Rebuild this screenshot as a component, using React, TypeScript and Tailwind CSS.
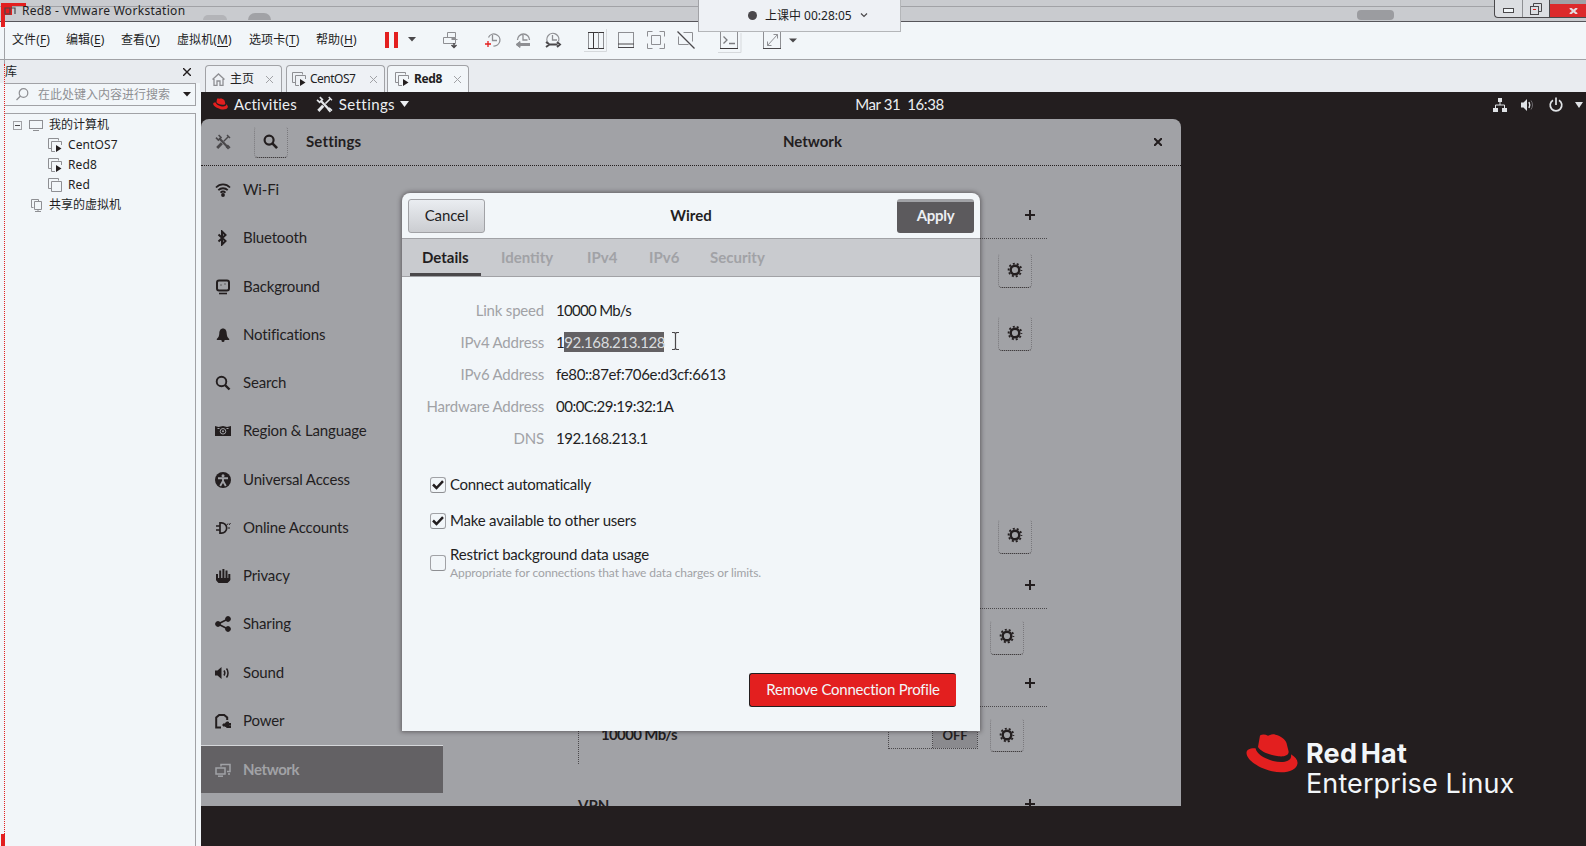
import type { ReactNode } from "react";

const CJK = "font-['Noto_Sans','Noto_Sans_CJK_SC',sans-serif]";

/* ---------- icons ---------- */

function Gear() {
  return (
    <svg width="16" height="16" viewBox="0 0 16 16" fill="none" stroke="#231e1f">
      <circle cx="8" cy="8" r="4.3" strokeWidth="2.4" />
      <circle cx="8" cy="8" r="6.4" strokeWidth="1.8" strokeDasharray="2 2.02" strokeDashoffset="1" />
    </svg>
  );
}

function Plus() {
  return (
    <svg width="10" height="10" viewBox="0 0 10 10" stroke="#231e1f" strokeWidth="2">
      <path d="M5 0v10M0 5h10" />
    </svg>
  );
}

function Tools({ size, color }: { size: number; color: string }) {
  return (
    <svg width={size} height={size} viewBox="0 0 16 16" fill="none" stroke={color}>
      <path d="M4.5 4.5l8 8.5" strokeWidth="2.2" />
      <path d="M1 3.6L3.4 6 6 3.4 3.6 1" strokeWidth="1.6" />
      <path d="M12.3 11.2l2.7 2.6M11.2 12.4l2.4 2.6" strokeWidth="1.6" />
      <path d="M13.5 2.5L8.8 7.2" strokeWidth="1.4" />
      <path d="M6.8 9.2L2.2 14" strokeWidth="2.8" />
      <path d="M12 1l3 3" strokeWidth="1.4" />
    </svg>
  );
}

function Hat({ w, h }: { w: number; h: number }) {
  return (
    <svg width={w} height={h} viewBox="0 0 52 39">
      <path
        fill="#e31f1f"
        d="M14 1.5c2-1.500 5.500-1.300 8 .2 2.500-1.300 5-1.700 7.500-1 5.500 1.500 9.500 4.300 11 8.300l2 8c1 4.500-4.500 6-10 5.300C24 21.300 14.500 17.500 12 13zM9.500 14.300c1.200 5.500 8 10 17.500 12.700 9 2.200 17 1 18-4 .3-1.300.1-2-.1-2.800 4.500 2.500 7 6 6.600 9.300-1 7.500-12.500 10.500-25.500 7.800C12 34 .5 25.500.5 19c0-3.500 3.500-5 9-4.700z"
      />
    </svg>
  );
}

function VmIcon({ running = true }: { running?: boolean }) {
  return (
    <svg className="shrink-0" width="14" height="14" viewBox="0 0 14 14" fill="none" stroke="#8e8f93">
      <path d="M3.500 10.500h-3v-10h10v2" />
      <path d={running ? "M7 13.500H3.500v-10h10V7" : "M3.500 3.500h10v10h-10z"} />
      {running && <path d="M8 7l5.500 3.500L8 14z" fill="#231e1f" stroke="none" />}
    </svg>
  );
}

const S = "#231e1f";
const sideIcons: Record<string, ReactNode> = {
  "Wi-Fi": (
    <g fill="none" stroke={S} strokeWidth="1.800">
      <path d="M1 5.500C5 1.300 11 1.300 15 5.500M3.300 8.200c2.700-2.600 6.700-2.600 9.400 0M5.500 10.600c1.500-1.300 3.500-1.300 5 0" />
      <circle cx="8" cy="13" r="1" fill={S} />
    </g>
  ),
  Bluetooth: <path d="M3.500 4.500l7 6.500L7 14.500v-13L10.500 5l-7 6.500" fill="none" stroke={S} strokeWidth="2" />,
  Background: (
    <g fill="none" stroke={S}>
      <rect x="2" y="1.500" width="12" height="10" rx="2" strokeWidth="2" />
      <path d="M4 14.500h8" strokeWidth="1.600" />
      <path d="M5.500 6h1M9.500 5h1" />
    </g>
  ),
  Notifications: (
    <g fill={S}>
      <path d="M8 1.500c2.600 0 3.600 2.300 3.700 5 .2 2.500.8 4 2.500 5.500v1H1.800v-1c1.700-1.500 2.300-3 2.500-5.500.1-2.700 1.100-5 3.700-5z" />
      <circle cx="8" cy="13.500" r="1.500" />
    </g>
  ),
  Search: (
    <g fill="none" stroke={S}>
      <circle cx="6.500" cy="6.500" r="4.800" strokeWidth="1.900" />
      <path d="M10 10l4.500 4.500" strokeWidth="2.400" />
    </g>
  ),
  "Region & Language": (
    <g>
      <path d="M0 3l3.500 1L8 3l4 1 4-1v10H0z" fill={S} />
      <circle cx="8" cy="8.300" r="2.800" fill="none" stroke="#a1a2a6" />
      <circle cx="8" cy="8.300" r="1" fill="#a1a2a6" />
      <path d="M2.500 5.500h2M11.500 5.500h2" stroke="#a1a2a6" />
    </g>
  ),
  "Universal Access": (
    <g>
      <circle cx="8" cy="8" r="8" fill={S} />
      <circle cx="8" cy="3.700" r="1.500" fill="#a1a2a6" />
      <path d="M3 6.200h10M8 6v4M8 9l-2.800 5M8 9l2.800 5" stroke="#a1a2a6" strokeWidth="1.900" />
    </g>
  ),
  "Online Accounts": (
    <g fill="none" stroke={S} strokeWidth="1.700">
      <path d="M5 2v12M5 2.800h1.500a5 5 0 010 10.400H5M1 6h4M1 10h4" />
      <path d="M11.500 5.500l1.500-2M13 8h2M14 5l1.500-2" strokeWidth="1" />
    </g>
  ),
  Privacy: (
    <g fill="none" stroke={S} strokeWidth="2">
      <path d="M2 6v6M5.200 2.500V12M8.400 1v11M11.500 2.500V12M14.300 6v6" />
      <path d="M1.200 10h13.900v2.500L12.500 15h-9l-2.300-2.500z" fill={S} stroke="none" />
    </g>
  ),
  Sharing: (
    <g fill={S} stroke={S}>
      <path d="M13 3L3 8l10 5" fill="none" strokeWidth="1.700" />
      <circle cx="13" cy="3" r="2.400" />
      <circle cx="3" cy="8" r="2.400" />
      <circle cx="13" cy="13" r="2.400" />
    </g>
  ),
  Sound: (
    <g>
      <path d="M0 5.500h2.500L6.500 2v12L2.500 10.500H0z" fill={S} />
      <path d="M9 5.500c1 1.500 1 3.500 0 5M11.500 3.500c2 2.500 2 6.500 0 9" fill="none" stroke={S} strokeWidth="1.500" />
    </g>
  ),
  Power: (
    <g>
      <path d="M6 14.500H1.200v-10l3-2.500h5l3 2.500V7" fill="none" stroke={S} strokeWidth="2" />
      <path d="M8 11h2l1.500-2h2v1.500H16V12h-2.500v1H16v1.500h-4L10 13H8z" fill={S} stroke={S} />
    </g>
  ),
  Network: (
    <g fill="none" stroke="#a1a2a6" strokeWidth="1.500">
      <path d="M6 4.500v-2h9v7h-3M13 12h2" />
      <rect x="1" y="6" width="9" height="6" />
      <path d="M3 14.200h5" />
    </g>
  ),
};

/* ---------- VMware chrome ---------- */

function TitleBar() {
  return (
    <div className="relative h-[22px] shrink-0 border-b border-[#56555a] bg-[#c9cbcf]">
      <div className="h-[7px] border-b border-[#a1a2a6]" />
      <div className="absolute left-[22px] top-0 whitespace-nowrap font-['Noto_Sans',sans-serif] text-[12px] leading-[21px] tracking-[0.3px] text-[#231e1f]">
        Red8 - VMware Workstation
      </div>
      <svg className="absolute left-0 top-0" width="30" height="28" viewBox="0 0 30 28">
        <path d="M1 3h25v3H12v9H5v12H1z" fill="#e31f1f" />
        <path d="M5 8h5v6H5zM11 8h4v6" fill="none" stroke="#4a484b" strokeWidth="1.200" />
      </svg>
      <div className="absolute left-[203px] top-[15px] h-[5px] w-[24px] rounded-t-full bg-[#b3b4b8]" />
      <div className="absolute left-[248px] top-[13px] h-[7px] w-[23px] rounded-t-full bg-[#a1a2a6]" />
      <div className="absolute left-[1357px] top-[10px] h-[10px] w-[37px] rounded-[4px] bg-[#9b9ca0]" />
      <div className="absolute right-0 top-0 flex h-[18px] w-[92px] rounded-bl border-b border-l border-[#4a484b] bg-[#dcdee2]">
        <div className="flex w-[28px] items-center justify-center border-r border-[#8e8f93]">
          <div className="mt-1 h-[5px] w-[11px] border border-[#4a484b] bg-[#f2f6f9]" />
        </div>
        <div className="flex w-[27px] items-center justify-center border-r border-[#4a484b]">
          <svg width="12" height="12" viewBox="0 0 12 12" fill="none" stroke="#4a484b">
            <path d="M3.500 3V.5h8v8H9" />
            <rect x=".5" y="3.500" width="8" height="8" />
            <path d="M3 6.500h3" stroke="#e31f1f" />
          </svg>
        </div>
        <div className="flex flex-1 flex-col bg-[#a1a2a6]">
          <div className="mt-[4px] flex flex-1 items-center justify-center bg-[#dc2a2b]">
            <svg className="ml-[11px]" width="9" height="6" viewBox="0 0 9 6" stroke="#e4dcdf" strokeWidth="2.200">
              <path d="M1 0l7 6M8 0L1 6" />
            </svg>
          </div>
        </div>
      </div>
    </div>
  );
}

const menus: [string, string, string][] = [
  ["文件", "F", "w-[54px]"],
  ["编辑", "E", "w-[55px]"],
  ["查看", "V", "w-[56px]"],
  ["虚拟机", "M", "w-[72px]"],
  ["选项卡", "T", "w-[67px]"],
  ["帮助", "H", "w-[68px]"],
];

function Caret({ className = "" }: { className?: string }) {
  return (
    <svg className={className} width="8" height="5" viewBox="0 0 8 5">
      <path d="M0 0h8L4 4.500z" fill="#4a484b" />
    </svg>
  );
}

function MenuBar() {
  return (
    <div className="flex h-[38px] shrink-0 items-center border-b border-[#a1a2a6] bg-[#f2f6f9] pl-[12px]">
      {menus.map(([t, k, w]) => (
        <div key={t} className={`${w} ${CJK} mb-[2px] shrink-0 whitespace-nowrap text-[12px] leading-[20px] tracking-[0.1px] text-[#231e1f]`}>
          {t}(<span className="underline underline-offset-2">{k}</span>)
        </div>
      ))}
      <div className="mb-[2px] flex gap-[5px] pl-px">
        <div className="h-4 w-1 bg-[#e31f1f]" />
        <div className="h-4 w-1 bg-[#e31f1f]" />
      </div>
      <Caret className="mb-[2px] ml-[10px] shrink-0" />
      <svg className="shrink-0" width="392" height="36" viewBox="416 23 392 36" fill="none" stroke="#8e8f93">
        <g transform="translate(6 0)">
          <path d="M441.500 37.500v-5h8v5M437.500 37.500h12v6h-12zM445.500 39.500h6M449.500 40.500v-2h-4" />
          <path d="M448 43v4M445.500 45l2.500 2.500 2.500-2.500" stroke="#4a484b" strokeWidth="1.500" />
        </g>
        <g transform="translate(8 0)">
          <path d="M480.500 37.500a6 6 0 115 8.500M484.500 35v5.500h4.500" strokeWidth="1.300" />
          <path d="M477 44h6M480 41v6" stroke="#e31f1f" strokeWidth="1.300" />
        </g>
        <g transform="translate(10 0)">
          <path d="M507.500 40a6 6 0 0112 0M513 35v5h4.500" strokeWidth="1.300" />
          <path d="M507 44.500h13" strokeWidth="3" />
          <path d="M506 44.500l4-3v6z" fill="#8e8f93" />
        </g>
        <g transform="translate(12 0)">
          <path d="M536.500 43.500a6 6 0 1110-2M540.500 35v5h4.500" strokeWidth="1.300" />
          <path d="M534 42l3.500 2.500h8M534 47l3.500-2.500M545 42l3 2.500-3 2.500" stroke="#4a484b" strokeWidth="1.900" />
        </g>
        <path d="M584 51.500h22.500V29" stroke="#d6d9dc" />
        <rect x="588.500" y="32.500" width="15" height="16" />
        <path d="M588 32.500h16M588 48.500h16M593.500 32.500v16" stroke="#3c393b" />
        <path d="M598.500 32.500v16" />
        <rect x="618.500" y="32.500" width="15" height="15" />
        <path d="M618 44h16M618 47.500h16" stroke="#4a484b" />
        <path d="M647.500 36.500v-5h5M659.500 31.500h5v5M664.500 43.500v5h-5M652.500 48.500h-5v-5M651.500 35.500h9v9h-9z" />
        <path d="M683.500 32.500h9v9M678.500 36.500v8h10" />
        <path d="M677.500 31.500l17 17" stroke="#4a484b" strokeWidth="1.300" />
        <path d="M718 52.500h23V33" stroke="#d6d9dc" />
        <rect x="720.500" y="31.500" width="17" height="17" />
        <path d="M720 31.500h18M720 48.500h18" stroke="#3c393b" />
        <path d="M723.500 36.500l3.500 3.500-3.500 3.500M729 43.500h6" stroke="#7b7b7f" strokeWidth="1.300" />
        <rect x="763.500" y="31.500" width="17" height="17" />
        <path d="M763 31.500h18M763 48.500h18" stroke="#4a484b" />
        <path d="M767.500 45.500l10-11M773.500 34.500h4v4M767.500 41.500v4h4" />
        <path d="M789 38.500h8l-4 4z" fill="#4a484b" stroke="none" />
      </svg>
    </div>
  );
}

function SessionTimer() {
  return (
    <div className={`absolute left-[698px] top-0 flex h-[32px] w-[203px] items-center border-x border-b border-[#b4b6b9] border-l-[#a1a2a6] bg-[#eef1f5] ${CJK}`}>
      <div className="ml-[49px] size-[9px] rounded-full bg-[#4a484b]" />
      <div className="ml-[8px] whitespace-nowrap text-[12px] leading-[30px] text-[#231e1f]">上课中 00:28:05</div>
      <svg className="ml-[8px]" width="8" height="5" viewBox="0 0 8 5" fill="none" stroke="#4a484b" strokeWidth="1.200">
        <path d="M1 .5l3 3 3-3" />
      </svg>
    </div>
  );
}

function Library() {
  const row = "flex h-5 items-center text-[12px] leading-5 text-[#231e1f]";
  return (
    <div className={`flex w-[200px] shrink-0 flex-col bg-[#f2f6f9] pl-[5px] pr-1 ${CJK}`}>
      <div className="-ml-[5px] -mr-1 flex h-[23px] items-center justify-between bg-[#e8ebef] pl-[5px] pr-[9px] text-[12px] text-[#231e1f]">
        <span>库</span>
        <svg width="8" height="8" viewBox="0 0 8 8" stroke="#231e1f" strokeWidth="1.400">
          <path d="M0 0l8 8M8 0L0 8" />
        </svg>
      </div>
      <div className="flex h-[23px] shrink-0 items-center border-y border-r border-[#a1a2a6]">
        <svg className="ml-[11px]" width="13" height="13" viewBox="0 0 13 13" fill="none" stroke="#8e8f93" strokeWidth="1.200">
          <circle cx="7.500" cy="5" r="4.300" />
          <path d="M4.500 8L.5 12" />
        </svg>
        <span className="ml-[9px] whitespace-nowrap text-[12px] leading-5 text-[#8e8f93]">在此处键入内容进行搜索</span>
        <svg className="ml-[13px] shrink-0" width="8" height="5" viewBox="0 0 8 5">
          <path d="M0 0h8L4 4.500z" fill="#231e1f" />
        </svg>
      </div>
      <div className="mt-[7px] flex-1 border-r border-t border-[#a1a2a6] pt-px">
        <div className={row}>
          <svg className="ml-2" width="9" height="9" viewBox="0 0 9 9" fill="none" stroke="#a1a2a6">
            <rect x=".5" y=".5" width="8" height="8" />
            <path d="M2 4.500h5" stroke="#4a484b" />
          </svg>
          <svg className="ml-[7px] mr-[6px]" width="14" height="11" viewBox="0 0 14 11" fill="none" stroke="#8e8f93">
            <rect x=".5" y=".5" width="13" height="8" />
            <path d="M4 10.500h6" />
          </svg>
          我的计算机
        </div>
        {["CentOS7", "Red8", "Red"].map((n) => (
          <div key={n} className={`${row} gap-[6px] pl-[43px] text-[12.5px] tracking-[0.1px]`}>
            <VmIcon running={n !== "Red"} />
            {n}
          </div>
        ))}
        <div className={row}>
          <svg className="ml-[26px] mr-[7px]" width="11" height="13" viewBox="0 0 11 13" fill="none" stroke="#8e8f93">
            <path d="M2.500 8.500h-2v-8h7v2M3.500 2.500h7v8h-7zM7 10.500v2M4 12.500h6" />
          </svg>
          共享的虚拟机
        </div>
      </div>
    </div>
  );
}

function TabX({ className }: { className: string }) {
  return (
    <svg className={className} width="7" height="7" viewBox="0 0 7 7" stroke="#a1a2a6">
      <path d="M0 0l7 7M7 0L0 7" />
    </svg>
  );
}

function TabStrip() {
  const tab = "flex h-[27px] items-center rounded-t border-x border-t border-[#a1a2a6] text-[12px] text-[#231e1f]";
  return (
    <div className={`flex h-[32px] shrink-0 items-end bg-[#e9ecf0] pl-[5px] ${CJK}`}>
      <div className={`${tab} w-[77px] bg-[#eef1f5] pl-[6px]`}>
        <svg width="13" height="13" viewBox="0 0 13 13" fill="none" stroke="#8e8f93" strokeWidth="1.300">
          <path d="M.5 6.500l6-5.500 6 5.500M2 6v6.300h3V8h3v4.300h3V6" />
        </svg>
        <span className="ml-[5px]">主页</span>
        <TabX className="ml-[12px]" />
      </div>
      <div className={`${tab} ml-1 w-[99px] bg-[#eef1f5] pl-[5px]`}>
        <VmIcon />
        <span className="ml-1 w-[44px] tracking-[-0.5px]">CentOS7</span>
        <TabX className="ml-[16px]" />
      </div>
      <div className={`${tab} ml-[2px] w-[82px] bg-[#f2f6f9] pl-[7px]`}>
        <VmIcon />
        <span className="ml-[5px] w-[29px] font-bold tracking-[-0.4px]">Red8</span>
        <TabX className="ml-[11px]" />
      </div>
    </div>
  );
}

/* ---------- GNOME desktop ---------- */

function TopBar() {
  return (
    <div className="grid h-[27px] shrink-0 grid-cols-[1fr_auto_1fr] items-center pl-[12px] text-[15px] leading-[24px] text-[#eceff2]">
      <div className="flex items-center pb-[3px]">
        <Hat w={15} h={12} />
        <span className="ml-[6px] tracking-[0.2px]">Activities</span>
        <span className="ml-[19px] flex items-center">
          <Tools size={17} color="#e4e7ea" />
        </span>
        <span className="ml-[6px] tracking-[0.4px]">Settings</span>
        <svg className="ml-[5px]" width="9" height="6" viewBox="0 0 9 6">
          <path d="M0 0h9L4.500 6z" fill="#eceff2" />
        </svg>
      </div>
      <div className="whitespace-pre pb-[3px] tracking-[-0.4px]">Mar 31  16:38</div>
      <div className="flex items-center justify-end pb-px">
        <svg width="16" height="16" viewBox="0 0 16 16" fill="#e0e3e6">
          <path d="M6 1h4v4H6zM1 11h5v4H1zM10 11h5v4h-5z" />
          <path d="M8 5v3M3.500 11V8h9v3" fill="none" stroke="#e0e3e6" />
        </svg>
        <svg className="ml-[12px]" width="16" height="16" viewBox="0 0 16 16">
          <path d="M1 5.500h2.500L7 2v12l-3.500-3.500H1z" fill="#e0e3e6" />
          <path d="M9 5c1 2 1 4 0 6" stroke="#e0e3e6" strokeWidth="1.500" fill="none" />
          <path d="M11 3.500c2 3 2 6 0 9" stroke="#6b696c" fill="none" />
        </svg>
        <svg className="ml-[12px]" width="16" height="16" viewBox="0 0 16 16" fill="none" stroke="#e0e3e6" strokeWidth="1.700">
          <path d="M5 3.200a5.800 5.800 0 106 0M8 .5V8" />
        </svg>
        <svg className="ml-[11px] mr-[3px]" width="8" height="6" viewBox="0 0 8 6">
          <path d="M0 0h8L4 6z" fill="#e0e3e6" />
        </svg>
      </div>
    </div>
  );
}

function Sidebar() {
  return (
    <div className="flex w-[242px] shrink-0 flex-col">
      {Object.keys(sideIcons).map((name) => {
        const on = name === "Network";
        return (
          <div
            key={name}
            className={`flex h-[48.25px] items-center pl-[14px] text-[15px] tracking-[-0.16px] ${
              on ? "border-t border-[#d5d7da] bg-[#636164] text-[#a1a2a6]" : "text-[#231e1f]"
            }`}
          >
            <svg width="16" height="16" viewBox="0 0 16 16">
              {sideIcons[name]}
            </svg>
            <span className={`mb-[1.5px] ml-[12px] ${on ? "font-bold tracking-[-0.4px]" : ""}`}>{name}</span>
          </div>
        );
      })}
    </div>
  );
}

const softButton =
  "flex w-[34px] items-center justify-center rounded border border-dotted border-t-transparent border-x-[#79787c] border-b-[#231e1f]";

function GearRow({ className }: { className: string }) {
  return (
    <div className={`flex shrink-0 items-center justify-end ${className}`}>
      <div className={`${softButton} h-[35px] pb-[2px]`}>
        <Gear />
      </div>
    </div>
  );
}

function SectionHead({ className = "" }: { className?: string }) {
  return (
    <div className={`flex h-[42px] shrink-0 items-center justify-end border-b border-dotted border-[#4a484b] pb-[5px] pr-[12px] ${className}`}>
      <Plus />
    </div>
  );
}

function NetworkPage() {
  return (
    <div className="flex w-[604px] shrink-0 flex-col overflow-hidden">
      <div className="mt-[22px] flex h-[51px] shrink-0 items-center justify-end border-b border-dotted border-[#4a484b] pr-[12px] pt-[4px]">
        <Plus />
      </div>
      <GearRow className="h-[63px] pr-[15px]" />
      <GearRow className="h-[63px] pr-[15px]" />
      <div className="h-[140px] shrink-0" />
      <GearRow className="h-[62px] pr-[15px]" />
      <SectionHead />
      <GearRow className="h-[56px] pr-[23px]" />
      <SectionHead />
      <div className="relative flex h-[57px] shrink-0">
        <div className="w-[136px] border-r border-dotted border-[#4a484b]" />
        <div className="ml-[22px] mt-[15px] text-[15px] leading-6 tracking-[-0.65px] font-bold text-[#231e1f]">10000 Mb/s</div>
        <div className="ml-auto mr-[69px] flex h-[42px] w-[90px] border border-dotted border-[#4a484b]">
          <div className="flex-1 border-r border-dotted border-[#4a484b]" />
          <div className="flex w-[44px] items-end justify-center bg-[#8a8a8e] pb-[3px] text-[13px] font-bold text-[#231e1f]">OFF</div>
        </div>
        <div className={`${softButton} absolute right-[23px] top-[11px] h-[34px]`}>
          <Gear />
        </div>
      </div>
      <div className="mt-[30px] flex h-[22px] shrink-0 items-start justify-between pl-[135px] pr-[12px] text-[15px] font-bold leading-[22px] text-[#231e1f]">
        <span>VPN</span>
        <span className="mt-[5px] flex">
          <Plus />
        </span>
      </div>
    </div>
  );
}

function Check({ on, className }: { on?: boolean; className: string }) {
  return (
    <div className={`flex size-4 shrink-0 items-center justify-center rounded-[3px] border border-[#a1a2a6] border-b-[#8e8f93] ${className}`}>
      {on && (
        <svg width="12" height="10" viewBox="0 0 12 10" fill="none" stroke="#231e1f" strokeWidth="2.500">
          <path d="M1 4.500L4.500 8 11 1.200" />
        </svg>
      )}
    </div>
  );
}

function Details() {
  const rows: [string, ReactNode, string][] = [
    ["Link speed", "10000 Mb/s", "tracking-[-0.7px]"],
    [
      "IPv4 Address",
      <>
        1<span className="inline-block h-5 w-[100px] bg-[#636164] leading-5 text-[#d9dcdf]">92.168.213.128</span>
      </>,
      "tracking-[-0.4px]",
    ],
    ["IPv6 Address", "fe80::87ef:706e:d3cf:6613", "tracking-[-0.33px]"],
    ["Hardware Address", "00:0C:29:19:32:1A", "tracking-[-0.5px]"],
    ["DNS", "192.168.213.1", "tracking-[-0.45px]"],
  ];
  return (
    <div className="relative flex flex-1 flex-col pl-[28px] pr-6 pt-[17px]">
      {rows.map(([k, v, t]) => (
        <div key={k} className="flex h-8 items-center whitespace-nowrap text-[15px] leading-8 text-[#231e1f]">
          <div className="w-[114px] shrink-0 text-right tracking-[-0.2px] text-[#a1a2a6]">
            <span className="-ml-4">{k}</span>
          </div>
          <div className={`ml-[12px] ${t}`}>{v}</div>
        </div>
      ))}
      <svg className="absolute left-[269px] top-[54px]" width="9" height="20" viewBox="0 0 9 20" fill="none" stroke="#4a484b" strokeWidth="1.200">
        <path d="M1 1.500h2.500l1 1 1-1H8M4.500 2v16M1 18.500h2.500l1-1 1 1H8" />
      </svg>
      <div className="mt-[13px] flex h-9 items-center text-[15px] tracking-[-0.3px] text-[#231e1f]">
        <Check on className="mr-1" />
        <span className="mb-[2px]">Connect automatically</span>
      </div>
      <div className="flex h-9 items-center text-[15px] tracking-[-0.2px] text-[#231e1f]">
        <Check on className="mr-1" />
        <span className="mb-[2px]">Make available to other users</span>
      </div>
      <div className="mt-[5px] flex items-start">
        <Check className="mr-1 mt-[11px]" />
        <div>
          <div className="text-[15px] leading-5 tracking-[-0.22px] text-[#231e1f]">Restrict background data usage</div>
          <div className="pt-px text-[12px] leading-4 tracking-[-0.1px] text-[#a1a2a6]">
            Appropriate for connections that have data charges or limits.
          </div>
        </div>
      </div>
      <div className="mb-[24px] ml-auto mt-auto flex h-[34px] w-[207px] items-center justify-center rounded-[3px] border border-r-0 border-[#231e1f] bg-[#e31f1f] pb-[2px] text-[15px] tracking-[-0.24px] text-[#f2f6f9]">
        Remove Connection Profile
      </div>
    </div>
  );
}

function WiredDialog() {
  const tabs: [string, string][] = [
    ["Identity", "w-[86px]"],
    ["IPv4", "w-[62px]"],
    ["IPv6", "w-[61px]"],
    ["Security", "w-[70px]"],
  ];
  return (
    <div className="absolute left-[201px] top-[74px] flex h-[538px] w-[578px] flex-col overflow-hidden rounded-t-lg bg-[#f2f6f9] shadow-[0_0_4px_1px_rgba(35,30,31,0.5)]">
      <div className="flex h-[46px] shrink-0 items-center justify-between border-b border-[#a1a2a6] px-[6px] text-[15px] text-[#231e1f]">
        <div className="flex h-[34px] w-[77px] items-center justify-center rounded-[3px] border border-[#a1a2a6] bg-linear-to-b from-[#eaedf1] to-[#cbcdd1] tracking-[-0.1px]">
          Cancel
        </div>
        <div className="font-bold">Wired</div>
        <div className="flex h-[34px] w-[77px] items-center justify-center rounded-[3px] border-t-[3px] border-[#a1a2a6] bg-[#5c5a5d] pb-[4px] font-bold tracking-[-0.3px] text-[#eceff2]">
          Apply
        </div>
      </div>
      <div className="flex h-[38px] shrink-0 border-b border-[#a1a2a6] bg-[#c9cbcf] pl-[8px] text-[15px] font-bold leading-[36px] text-[#a1a2a6]">
        <div className="mr-[20px] w-[71px] border-b-[3px] border-[#4a484b] pl-[12px] text-[#231e1f]">Details</div>
        {tabs.map(([t, w]) => (
          <div key={t} className={w}>
            {t}
          </div>
        ))}
      </div>
      <Details />
    </div>
  );
}

function SettingsWindow() {
  return (
    <div className="relative flex h-[687px] w-[980px] flex-col rounded-t-lg bg-[#a1a2a6]">
      <div className="flex h-[47px] shrink-0 items-center border-b border-dotted border-[#231e1f] text-[15px] font-bold text-[#231e1f]">
        <div className="ml-[14px] flex">
          <Tools size={16} color="#4a484b" />
        </div>
        <div className={`${softButton} ml-[23px] h-[32px]`}>
          <svg className="-ml-px mb-[2px]" width="15" height="15" viewBox="0 0 16 16" fill="none" stroke="#231e1f">
            <circle cx="6.500" cy="6.500" r="4.800" strokeWidth="2.300" />
            <path d="M10 10l5 5" strokeWidth="2.800" />
          </svg>
        </div>
        <div className="mb-[2px] ml-[18px] w-[165px] tracking-[0.15px]">Settings</div>
        <div className="mb-[2px] flex-1 text-center">Network</div>
        <svg className="mr-[19px]" width="8" height="8" viewBox="0 0 8 8" stroke="#231e1f" strokeWidth="2">
          <path d="M0 0l8 8M8 0L0 8" />
        </svg>
      </div>
      <div className="flex min-h-0 flex-1 overflow-hidden">
        <Sidebar />
        <NetworkPage />
      </div>
      <WiredDialog />
    </div>
  );
}

export default function App() {
  return (
    <div className="relative flex h-[846px] w-[1586px] flex-col overflow-hidden bg-[#f2f6f9]">
      <TitleBar />
      <MenuBar />
      <div className="flex min-h-0 flex-1">
        <Library />
        <div className="flex min-w-0 flex-1 flex-col">
          <TabStrip />
          <div className="relative ml-px flex min-h-0 flex-1 flex-col bg-[#231e1f] font-['Lato',sans-serif]">
            <TopBar />
            <SettingsWindow />
            <div className="absolute left-[1045px] top-[642px] flex">
              <Hat w={52} h={39} />
              <div className="ml-[8px] mt-[5px] whitespace-nowrap font-['Inter',sans-serif] text-[#f2f6f9]">
                <div className="text-[27px] font-bold leading-[30px] tracking-[0.2px] [word-spacing:-3px]">Red Hat</div>
                <div className="text-[27px] leading-[30px] tracking-[0.1px]">Enterprise Linux</div>
              </div>
            </div>
          </div>
        </div>
      </div>
      <SessionTimer />
      <div className="absolute left-[4px] top-[28px] h-[36px] w-px bg-[#a1a2a6]" />
      <div className="absolute bottom-0 left-[4px] top-[64px] border-l border-dotted border-[#e31f1f]" />
      <div className="absolute bottom-0 left-px h-[12px] w-1 bg-[#e31f1f]" />
    </div>
  );
}
